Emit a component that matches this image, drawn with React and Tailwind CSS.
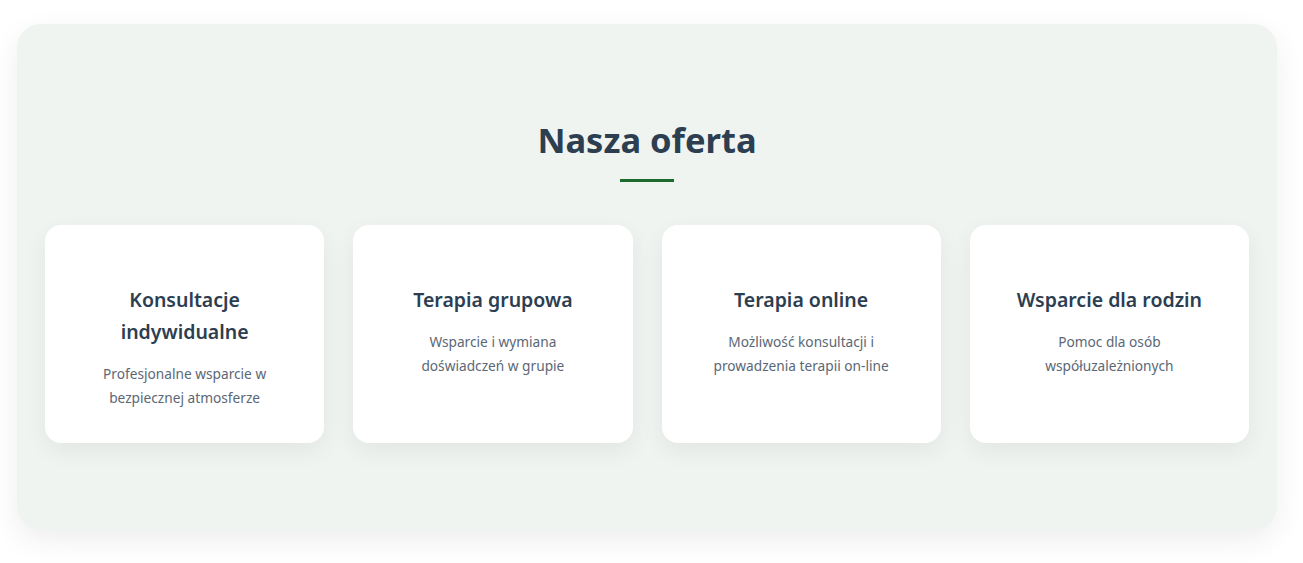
const offers = [
  { title: 'Konsultacje indywidualne', text: 'Profesjonalne wsparcie w bezpiecznej atmosferze' },
  { title: 'Terapia grupowa', text: 'Wsparcie i wymiana doświadczeń w grupie' },
  { title: 'Terapia online', text: 'Możliwość konsultacji i prowadzenia terapii on-line' },
  { title: 'Wsparcie dla rodzin', text: 'Pomoc dla osób współuzależnionych' },
];

const App = () => {
  return (
    <div className="min-h-screen bg-white pt-[24px] px-[17px] font-['Noto_Sans','Open_Sans',sans-serif]">
      <section className="w-[1260px] h-[506px] bg-[#eff4f0] rounded-[24px] shadow-[0_10px_30px_rgba(0,0,0,0.07)] pt-[94px] px-[28px]">
        <div className="flex flex-col items-center">
          <h2 className="text-[34.5px] leading-[44px] font-bold text-[#2c3e50]">Nasza oferta</h2>
          <div className="w-[54px] h-[3px] bg-[#1b6b2c] mt-[17px]"></div>
        </div>

        {/* Karty oferty */}
        <div className="grid grid-cols-4 gap-[29px] mt-[43px]">
          {offers.map((offer) => (
            <div
              key={offer.title}
              className="bg-white rounded-[16px] h-[218px] shadow-[0_8px_24px_rgba(0,0,0,0.06)] pt-[59px] px-[38px] text-center"
            >
              <h3 className="text-[19.5px] leading-[32px] font-semibold text-[#2c3e50]">{offer.title}</h3>
              <p className="mt-[14px] text-[13.7px] leading-[23.5px] text-[#5b6776]">{offer.text}</p>
            </div>
          ))}
        </div>
      </section>
    </div>
  );
};

export default App;
